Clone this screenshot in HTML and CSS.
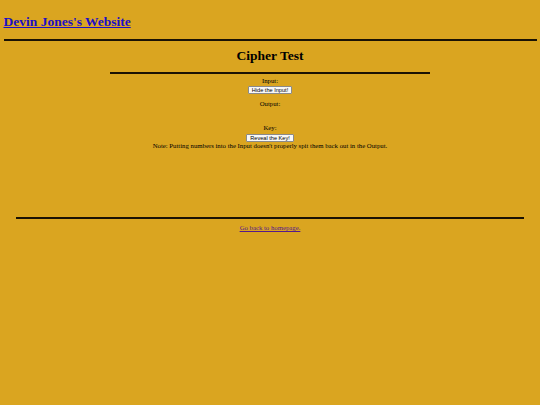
FILE: index.html
```html
<!DOCTYPE html>
<html>
<head>
<meta charset="utf-8">
<title>Cipher Test</title>
<link rel="stylesheet" href="styles.css">
</head>
<body class="page">
<h1 class="site-title"><a class="home-link" href="#">Devin Jones's Website</a></h1>
<hr class="rule rule-full">
<div class="content">
  <h1 class="page-title">Cipher Test</h1>
  <hr class="rule rule-narrow">
  <div class="field">
    <div class="label">Input:</div>
    <button class="btn" type="button">Hide the Input!</button>
  </div>
  <div class="field output">
    <div class="label">Output:</div>
  </div>
  <div class="field key">
    <div class="label">Key:</div>
    <button class="btn" type="button">Reveal the Key!</button>
  </div>
  <p class="note">Note: Putting numbers into the Input doesn't properly spit them back out in the Output.</p>
</div>
<hr class="rule rule-footer">
<p class="footer"><a class="back-link" href="#">Go back to homepage.</a></p>
</body>
</html>
```

FILE: styles.css
```css
html {
  background: #daa520;
}
.page {
  margin: 0;
  padding: 0 3.5px;
  font-family: "Liberation Serif", "Times New Roman", serif;
  font-size: 6.75px;
  color: #000;
  background: #daa520;
}
.site-title {
  font-size: 13.5px;
  line-height: 16px;
  font-weight: bold;
  margin: 13.5px 0 0;
}
.home-link {
  color: #1c0fc4;
}
.rule {
  border: none;
  height: 2px;
  background: #1a1204;
  margin: 0 auto;
}
.rule-full {
  margin-top: 9.5px;
}
.content {
  text-align: center;
}
.page-title {
  font-size: 13.5px;
  line-height: 16px;
  font-weight: bold;
  margin: 6.5px 0 8.8px;
}
.rule-narrow {
  width: 60%;
}
.field {
  display: flex;
  flex-direction: column;
  align-items: center;
  gap: 1.5px;
}
.label {
  line-height: 8px;
}
.field:first-of-type {
  margin-top: 2.5px;
}
.btn {
  box-sizing: border-box;
  height: 8px;
  font-family: "Liberation Sans", Arial, sans-serif;
  font-size: 5.6px;
  line-height: 6px;
  padding: 0 3px;
  background: #f8f8f8;
  border: 0.5px solid #8a8a8a;
  border-radius: 1px;
  color: #000;
}
.output {
  margin-top: 6.2px;
}
.key {
  margin-top: 16px;
}
.note {
  margin: 0;
  line-height: 7.5px;
}
.rule-footer {
  width: 508px;
  margin-top: 68px;
}
.footer {
  text-align: center;
  line-height: 8px;
  margin: 4.7px 0 0;
}
.back-link {
  color: #551a8b;
}
```
